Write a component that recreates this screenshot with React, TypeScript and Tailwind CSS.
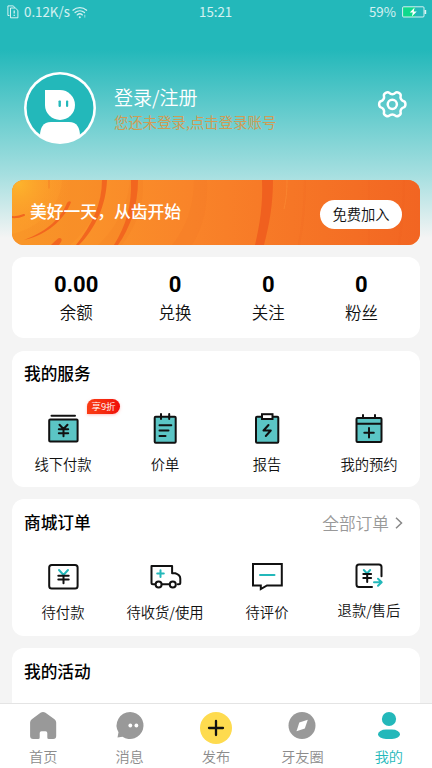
import type { ReactNode } from "react";

const INK = "#111111";
const TEAL = "#23b8ba";
const MINT = "#5bc5c5";

/* ---------- status bar ---------- */

function StatusBar() {
  return (
    <div className="relative flex h-6 items-center justify-between pr-[5px] pl-[7px] text-[13.3px] leading-none font-normal text-white/80">
      <div className="flex items-center">
        <svg className="h-[14px] w-3" viewBox="0 0 12 14" fill="none" stroke="currentColor" strokeWidth="1">
          <path d="M2.5 10.5H.9V.9h5.2l2 1.8" />
          <path d="M3.5 3h4.8l2.6 2.4v7.4H3.5z" />
          <path d="M7.2 5.6v3M7.2 9.8v1.2" strokeWidth="1.3" />
        </svg>
        <span className="ml-[5px]">0.12K/s</span>
        <svg className="ml-[2px] h-[13px] w-4" viewBox="0 0 16 13" fill="none" stroke="currentColor" strokeWidth="1.3" strokeLinecap="round">
          <path d="M1 4.2a10.5 10.5 0 0 1 13.6 0M3.1 6.6a7.3 7.3 0 0 1 9.4 0M5.2 8.9a4 4 0 0 1 5.2 0" />
          <circle cx="7.8" cy="11.2" r="1" fill="currentColor" stroke="none" />
          <path d="M12.8 9.2v2" strokeWidth=".7" />
        </svg>
      </div>
      <span className="absolute left-[199px]">15:21</span>
      <div className="flex items-center">
        <span>59%</span>
        <svg className="ml-[6px] h-3 w-[25px]" viewBox="0 0 25 12">
          <rect x="1" y="1" width="12" height="10" fill="#0fd98c" />
          <rect x=".6" y=".8" width="21.4" height="10.2" rx="1" fill="none" stroke="#fff" strokeOpacity=".8" />
          <rect x="22.600" y="4" width="1.6" height="4" fill="#fff" fillOpacity=".85" />
          <path d="M12.600 1.5 7.800 6.600h3L9.800 10.600l5-5.200h-3.100z" fill="#fff" />
        </svg>
      </div>
    </div>
  );
}

/* ---------- profile header ---------- */

function Avatar() {
  return (
    <svg className="h-[72px] w-[72px]" viewBox="0 0 72 72">
      <clipPath id="avatar-clip">
        <circle cx="36" cy="36" r="35" />
      </clipPath>
      <circle cx="36" cy="36" r="36" fill="#fff" />
      <circle cx="36" cy="36" r="33.4" fill={TEAL} />
      <g clipPath="url(#avatar-clip)">
        <path d="M21 18h15a15 15 0 1 1-15 15z" fill="#fff" />
        <path d="M16 64c0-8 3-14 11-14h18c8 0 11 6 11 14-6 5-13 7-20 7s-14-2-20-7z" fill="#fff" />
      </g>
      <rect x="34.5" y="28.5" width="2.4" height="6.4" rx=".8" fill={TEAL} />
      <rect x="42" y="28.5" width="2.2" height="6.4" rx=".8" fill={TEAL} />
    </svg>
  );
}

// six-lobed outline, smoothed with quadratics through the midpoints
function gearPath(cx: number, cy: number) {
  const pts: [number, number][] = [];
  for (let k = 0; k < 6; k++) {
    for (const [r, deg] of [[13.4, -11], [13.4, 11], [10.3, 20], [10.3, 40]]) {
      const a = ((k * 60 + deg) * Math.PI) / 180;
      pts.push([cx + r * Math.cos(a), cy + r * Math.sin(a)]);
    }
  }
  const mid = (i: number) => {
    const [ax, ay] = pts[i % pts.length];
    const [bx, by] = pts[(i + 1) % pts.length];
    return `${((ax + bx) / 2).toFixed(2)} ${((ay + by) / 2).toFixed(2)}`;
  };
  return (
    `M${mid(pts.length - 1)}` +
    pts.map(([x, y], i) => `Q${x.toFixed(2)} ${y.toFixed(2)} ${mid(i)}`).join("") +
    "Z"
  );
}

function GearIcon() {
  return (
    <svg className="h-[30px] w-[30px]" viewBox="0 0 30 30" fill="none" stroke="#fff" strokeWidth="2.5">
      <path d={gearPath(15.3, 15.3)} />
      <circle cx="15.300" cy="15.300" r="4.600" />
    </svg>
  );
}

function Profile() {
  return (
    <div className="flex h-[156px] items-start pt-12 pr-[25px] pl-6">
      <Avatar />
      <div className="ml-[18px] flex-1 pt-[11px]">
        <div className="text-[19px] leading-7 text-white">登录/注册</div>
        <div className="mt-px text-[14.4px] leading-5 font-normal text-[#cf9c55]">您还未登录,点击登录账号</div>
      </div>
      <div className="pt-[17px]">
        <GearIcon />
      </div>
    </div>
  );
}

/* ---------- membership banner ---------- */

function BannerRings() {
  return (
    <svg className="absolute inset-0 h-full w-full" viewBox="0 0 408 65" preserveAspectRatio="none" fill="none">
      <defs>
        <linearGradient id="banner" x1="0" x2="1">
          <stop offset="0" stopColor="#fb9c2a" />
          <stop offset=".45" stopColor="#f98329" />
          <stop offset="1" stopColor="#f26522" />
        </linearGradient>
        <radialGradient id="glow" gradientUnits="userSpaceOnUse" cx="6" cy="4" r="52">
          <stop offset="0" stopColor="#fdb42c" />
          <stop offset="1" stopColor="#fb962a" stopOpacity="0" />
        </radialGradient>
      </defs>
      <rect width="408" height="65" fill="url(#banner)" />
      <path d="M50 0C49 22 32 47 0 54V65H58C80 46 90 24 90 0z" fill="#ee6a1e" fillOpacity=".1" />
      <path d="M118 0C116 26 104 48 86 65h24C126 44 132 24 131 0z" fill="#ee6a1e" fillOpacity=".1" />
      <path d="M182 0C182 26 174 48 160 65h20C192 46 196 24 195 0z" fill="#ee6a1e" fillOpacity=".12" />
      <rect width="90" height="65" fill="url(#glow)" />
      <g stroke="#f2661f" strokeLinecap="round">
        <path d="M0 37c4 .5 8-.3 12-2" strokeWidth="2" />
        <path d="M37 0v8" strokeWidth="1" strokeOpacity=".5" />
      </g>
      <g fill="#f2661f">
        <path d="M55 23q2-3 4-1C54 36 39 54 12 60C36 51 49 38 55 23z" />
        <path d="M39 65q6-6 8-7q4 0 2 4l-2 3z" />
        <path d="M90 0h5C94 26 83 49 67 65h-3C80 45 90 24 90 0z" />
        <path d="M119 0h7C126 26 118 48 106 65h-4C114 46 120 25 119 0z" />
        <path d="M250 0h11C261 25 257 46 252 65h-9C248 44 251 24 250 0z" fill="#f0601f" />
      </g>
      <path d="M275 0c0 12-1 20-3 29" stroke="#fb8d35" strokeOpacity=".6" />
      <path d="M293 0c0 24-2 44-6 65M357 0v65M392 0c0 28-2 44-5 65" stroke="#e85a1a" strokeOpacity=".1" strokeWidth="2" />
    </svg>
  );
}

function Banner() {
  return (
    <div className="relative h-[65px] overflow-hidden rounded-xl bg-[#f77f28]">
      <BannerRings />
      <div className="relative flex h-full items-center justify-between px-[18px]">
        <span className="pb-[2px] text-[16.8px] font-medium text-white">美好一天，从齿开始</span>
        <button className="mt-[3px] h-[29px] w-[82px] rounded-full bg-white pb-[2px] text-[14.3px] leading-[27px] text-[#111]">免费加入</button>
      </div>
    </div>
  );
}

/* ---------- stats ---------- */

const stats = [
  { label: "余额", value: "0.00" },
  { label: "兑换", value: "0" },
  { label: "关注", value: "0" },
  { label: "粉丝", value: "0" },
];

function Stats() {
  return (
    <div className="mt-3 flex h-[81px] justify-around rounded-xl bg-white px-3 pt-[14px]">
      {stats.map((s) => (
        <div key={s.label} className="flex flex-col items-center">
          <span className="font-['Roboto','Noto_Sans_CJK_SC',sans-serif] text-[22px] leading-[27px] font-bold text-black">{s.value}</span>
          <span className="mt-px text-[16.5px] leading-[26px] text-[#111]">{s.label}</span>
        </div>
      ))}
    </div>
  );
}

/* ---------- icons of the two grids ---------- */

function Icon({ children }: { children: ReactNode }) {
  return (
    <svg className="h-9 w-9" viewBox="0 0 36 36" fill="none" stroke={INK} strokeWidth="2" strokeLinecap="round" strokeLinejoin="round">
      {children}
    </svg>
  );
}

const services = [
  {
    label: "线下付款",
    badge: "享9折",
    icon: (
      <Icon>
        <path d="M6.500 4.700h23.500" />
        <rect x="4.200" y="8.600" width="28.400" height="21.800" rx="1" fill={MINT} />
        <path d="m14.500 13.700 4 4.300 4-4.300M13.800 18.300h9.400M13.800 22.300h9.400M18.500 18.300v7" />
      </Icon>
    ),
  },
  {
    label: "价单",
    icon: (
      <Icon>
        <rect x="7.700" y="5.700" width="21" height="26" rx="1" fill={MINT} />
        <path d="M14 3v5M22.200 3v5M12.500 14.200h11.800M12.500 19.500h9M12.500 25h6" />
      </Icon>
    ),
  },
  {
    label: "报告",
    icon: (
      <Icon>
        <rect x="7" y="5.700" width="22.300" height="26" rx="1" fill={MINT} />
        <rect x="13" y="3.200" width="10.500" height="4.800" fill="#fff" strokeLinejoin="miter" />
        <path d="m19.500 14-5 5.500h7.300l-5 5.500" />
      </Icon>
    ),
  },
  {
    label: "我的预约",
    icon: (
      <Icon>
        <path d="M12 4v4M24 4v4" />
        <rect x="5.500" y="6.900" width="25" height="24" rx="1" fill={MINT} />
        <path d="M6 12.700h24M18 17v9.500M13.300 21.700h9.500" />
      </Icon>
    ),
  },
];

const orders = [
  {
    label: "待付款",
    icon: (
      <Icon>
        <rect x="4.200" y="4.900" width="28.400" height="23.600" rx="2.500" />
        <path d="m14 10 4.500 5 4.500-5" stroke={TEAL} />
        <path d="M13.300 15.800h10.400M13.300 19.500h10.400M18.500 15.800v7.500" />
      </Icon>
    ),
  },
  {
    label: "待收货/使用",
    icon: (
      <Icon>
        <path d="M7.800 24.200H6q-1.500 0-1.500-1.500V6.100h20.600v7.200h3.200q5 1.700 5 5.500v3.900q0 1.500-1.500 1.500h-1M14.800 24.200h7.500" />
        <path d="M13.500 10.300v6.600M10.200 13.600h6.600" stroke={TEAL} />
        <circle cx="11.600" cy="24.500" r="3" />
        <circle cx="25.800" cy="24.500" r="3" />
      </Icon>
    ),
  },
  {
    label: "待评价",
    icon: (
      <Icon>
        <path d="M4 4h28.800v21.500H18l-6.200 3.600v-3.600H4z" strokeLinejoin="miter" />
        <path d="M11 15h14.500" stroke={TEAL} />
      </Icon>
    ),
  },
  {
    label: "退款/售后",
    raised: true,
    icon: (
      <Icon>
        <path d="M21 27H8q-2.500 0-2.500-2.500V6.900Q5.500 4.400 8 4.400h20q2.500 0 2.500 2.500v9.300" />
        <path d="m12.800 10 3.200 3.500 3.200-3.500M23 22.200h7.500M27 18.700l3.700 3.500-3.700 3.500" stroke={TEAL} />
        <path d="M12.300 14h7.800M12.300 18h7.800M16.200 14v8" />
      </Icon>
    ),
  },
];

function CardTitle({ children }: { children: ReactNode }) {
  return <h2 className="text-[16.7px] leading-6 font-medium text-black">{children}</h2>;
}

function ServiceCard() {
  return (
    <section className="mt-[13px] h-[136px] rounded-xl bg-white pt-[10px]">
      <div className="px-3">
        <CardTitle>我的服务</CardTitle>
      </div>
      <div className="mt-[26px] flex">
        {services.map((item) => (
          <div key={item.label} className="relative flex flex-1 flex-col items-center">
            {item.icon}
            {item.badge && (
              <span className="absolute -top-[12px] left-[75px] h-[15px] w-[33px] rounded-[8px] rounded-bl-none bg-gradient-to-r from-[#fa3c14] to-[#f00a0a] text-center text-[9.5px] leading-[14px] text-white shadow-sm shadow-red-200">
                {item.badge}
              </span>
            )}
            <span className="mt-[7px] text-[14.3px] leading-5 text-[#111]">{item.label}</span>
          </div>
        ))}
      </div>
    </section>
  );
}

function OrderCard() {
  return (
    <section className="mt-3 h-[137px] rounded-xl bg-white pt-[10px]">
      <div className="flex items-center justify-between pr-[17px] pl-3">
        <CardTitle>商城订单</CardTitle>
        <div className="flex items-center pt-[2px] text-[16.7px] leading-6 text-[#999]">
          全部订单
          <svg className="ml-[6px] h-3 w-2" viewBox="0 0 8 12" fill="none" stroke="#888" strokeWidth="1.5">
            <path d="m1 .8 5.500 5.200L1 11.200" />
          </svg>
        </div>
      </div>
      <div className="mt-[25px] flex">
        {orders.map((item) => (
          <div key={item.label} className="flex flex-1 flex-col items-center">
            {item.icon}
            <span className={item.raised ? "mt-[4px] text-[14.3px] leading-5 text-[#111]" : "mt-[6px] text-[14.3px] leading-5 text-[#111]"}>
              {item.label}
            </span>
          </div>
        ))}
      </div>
    </section>
  );
}

/* ---------- bottom navigation ---------- */

const tabs = [
  {
    label: "首页",
    icon: (
      <path d="M13.500 3.800q2.500-1.800 5 0l9 6.500q1.700 1.300 1.700 3.300v13.400q0 3-3 3h-4.400q-1.500 0-1.500-1.500V24q0-1.800-1.800-1.800h-4q-1.800 0-1.800 1.800v4.500q0 1.500-1.500 1.500H6.100q-3 0-3-3V13.600q0-2 1.700-3.300z" fill="#999" />
    ),
  },
  {
    label: "消息",
    icon: (
      <>
        <path d="M16.200 3a13.500 13.500 0 1 1-7.700 24.700L3.500 28.500l1-5.200A13.500 13.500 0 0 1 16.200 3z" fill="#999" />
        <circle cx="16.300" cy="16.500" r="1.900" fill="#fff" />
        <circle cx="22.400" cy="16.500" r="1.900" fill="#fff" />
      </>
    ),
  },
  {
    label: "发布",
    icon: (
      <>
        <circle cx="16" cy="19" r="16" fill="#fedb4f" />
        <path d="M16 12v14M9 19h14" stroke={INK} strokeWidth="2.300" strokeLinecap="round" />
      </>
    ),
  },
  {
    label: "牙友圈",
    icon: (
      <>
        <circle cx="16" cy="16.500" r="13.500" fill="#999" />
        <path d="m21.800 10.800-3 8.700-8.300 2.700 2.800-8.700z" fill="#fff" />
      </>
    ),
  },
  {
    label: "我的",
    active: true,
    icon: (
      <>
        <circle cx="16" cy="10" r="7.100" fill={TEAL} />
        <rect x="5" y="20.500" width="22" height="9.500" rx="8" ry="4.700" fill={TEAL} />
      </>
    ),
  },
];

function TabBar() {
  return (
    <nav className="flex h-[65px] shrink-0 border-t border-[#e4e4e4] bg-white pt-[5px]">
      {tabs.map((tab) => (
        <div key={tab.label} className="flex flex-1 flex-col items-center">
          <svg className="h-8 w-8 overflow-visible" viewBox="0 0 32 32" fill="none">
            {tab.icon}
          </svg>
          <span className={tab.active ? "mt-[5px] text-[14.2px] leading-5 text-[#23b8ba]" : "mt-[5px] text-[14.2px] leading-5 text-[#8c8c8c]"}>
            {tab.label}
          </span>
        </div>
      ))}
    </nav>
  );
}

export default function App() {
  return (
    <div className="flex h-[768px] w-[432px] flex-col overflow-hidden bg-[#f4f4f4] bg-[linear-gradient(180deg,#23b8ba_0px,#23b8ba_50px,#a6dfe0_175px,#f4f4f4_238px)] font-['Noto_Sans_CJK_SC',sans-serif] font-[350]">
      <StatusBar />
      <main className="min-h-0 flex-1 overflow-hidden">
        <Profile />
        <div className="px-3">
          <Banner />
          <Stats />
          <ServiceCard />
          <OrderCard />
          <section className="mt-3 h-[137px] rounded-xl bg-white px-3 pt-[11px]">
            <CardTitle>我的活动</CardTitle>
          </section>
        </div>
      </main>
      <TabBar />
    </div>
  );
}
